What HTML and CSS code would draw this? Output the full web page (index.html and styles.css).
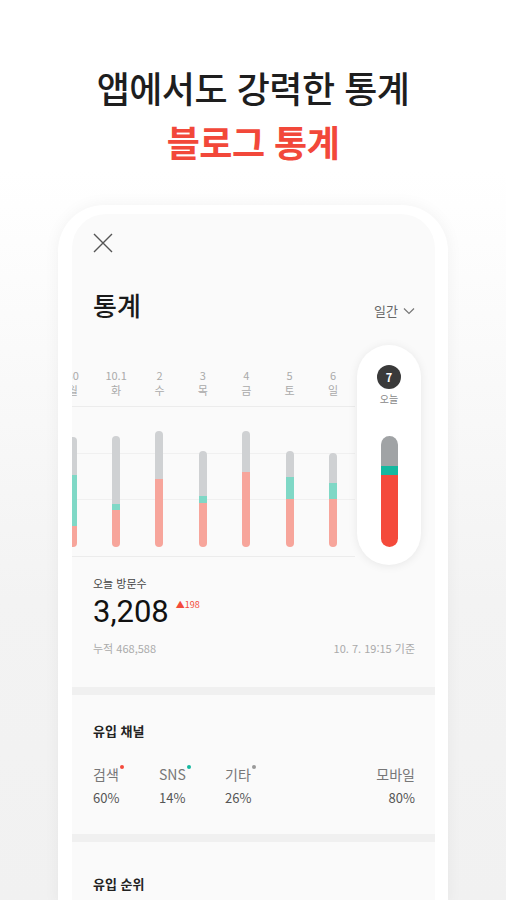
FILE: index.html
```html
<!DOCTYPE html>
<html lang="ko">
<head>
<meta charset="utf-8">
<title>블로그 통계</title>
<link rel="stylesheet" href="styles.css">
</head>
<body>
<header class="promo">
  <h1 class="promo-line">앱에서도 강력한 통계</h1>
  <p class="promo-line promo-accent">블로그 통계</p>
</header>
<div class="phone">
  <div class="screen">
    <div class="close">
      <svg width="20" height="20" viewBox="0 0 20 20"><path d="M1 1L19 19M19 1L1 19" stroke="#555" stroke-width="1.4" fill="none"/></svg>
    </div>
    <div class="title-row">
      <h2 class="title">통계</h2>
      <div class="period">일간
        <svg width="12" height="8" viewBox="0 0 12 8"><path d="M1 1.5L6 6.5L11 1.5" stroke="#777" stroke-width="1.2" fill="none"/></svg>
      </div>
    </div>
    <div class="chart">
      <div class="chart-cols">
        <div class="col"><div class="lbl"><span>30</span><span>월</span></div><div class="bar-area"><div class="bar"><i class="g" style="height:38px"></i><i class="t" style="height:51px"></i><i class="p" style="height:21px"></i></div></div></div>
        <div class="col"><div class="lbl"><span>10.1</span><span>화</span></div><div class="bar-area"><div class="bar"><i class="g" style="height:68px"></i><i class="t" style="height:6px"></i><i class="p" style="height:37px"></i></div></div></div>
        <div class="col"><div class="lbl"><span>2</span><span>수</span></div><div class="bar-area"><div class="bar"><i class="g" style="height:48px"></i><i class="p" style="height:68px"></i></div></div></div>
        <div class="col"><div class="lbl"><span>3</span><span>목</span></div><div class="bar-area"><div class="bar"><i class="g" style="height:45px"></i><i class="t" style="height:7px"></i><i class="p" style="height:44px"></i></div></div></div>
        <div class="col"><div class="lbl"><span>4</span><span>금</span></div><div class="bar-area"><div class="bar"><i class="g" style="height:41px"></i><i class="p" style="height:75px"></i></div></div></div>
        <div class="col"><div class="lbl"><span>5</span><span>토</span></div><div class="bar-area"><div class="bar"><i class="g" style="height:26px"></i><i class="t" style="height:22px"></i><i class="p" style="height:48px"></i></div></div></div>
        <div class="col"><div class="lbl"><span>6</span><span>일</span></div><div class="bar-area"><div class="bar"><i class="g" style="height:30px"></i><i class="t" style="height:16px"></i><i class="p" style="height:48px"></i></div></div></div>
      </div>
      <div class="today">
        <div class="today-day">7</div>
        <div class="today-lbl">오늘</div>
        <div class="today-bar"><i class="g" style="height:30px"></i><i class="t" style="height:9px"></i><i class="r" style="height:72px"></i></div>
      </div>
    </div>
    <section class="visits">
      <div class="small-label">오늘 방문수</div>
      <div class="visit-num">3,208<span class="delta">▲198</span></div>
      <div class="visit-foot"><span>누적 468,588</span><span>10. 7. 19:15 기준</span></div>
    </section>
    <section class="inflow">
      <h3 class="sec-title">유입 채널</h3>
      <div class="channels">
        <div class="ch"><div class="ch-name">검색<b class="dot dot-red"></b></div><div class="ch-val">60%</div></div>
        <div class="ch"><div class="ch-name">SNS<b class="dot dot-teal"></b></div><div class="ch-val">14%</div></div>
        <div class="ch"><div class="ch-name">기타<b class="dot dot-gray"></b></div><div class="ch-val">26%</div></div>
        <div class="ch ch-right"><div class="ch-name">모바일</div><div class="ch-val">80%</div></div>
      </div>
    </section>
    <section class="rank">
      <h3 class="sec-title">유입 순위</h3>
    </section>
  </div>
</div>
</body>
</html>
```
FILE: styles.css
```css
* { box-sizing: border-box; }
html, body { margin: 0; padding: 0; }
body {
  width: 506px;
  height: 900px;
  overflow: hidden;
  font-family: "Noto Sans CJK KR", "Noto Sans", sans-serif;
  background: linear-gradient(#ffffff 0px, #ffffff 170px, #f3f3f3 600px, #f1f1f1 900px);
  color: #222;
}
.promo { padding-top: 60px; text-align: center; }
.promo-line {
  margin: 0;
  font-size: 36px;
  line-height: 54px;
  font-weight: 500;
  color: #1e1e1e;
  letter-spacing: -0.5px;
}
.promo-accent { color: #f2483a; font-weight: 700; }
.phone {
  margin: 37px 0 0 58px;
  width: 390px;
  height: 700px;
  padding: 9px 13px 0 14px;
  background: #fff;
  border-radius: 46px 46px 0 0;
  box-shadow: 0 0 16px rgba(0,0,0,0.05);
}
.screen {
  width: 363px;
  height: 700px;
  background: #fafafa;
  border-radius: 34px 34px 0 0;
  overflow: hidden;
  position: relative;
}
.close { padding: 19px 0 0 21px; height: 39px; }
.close svg { display: block; }
.title-row {
  margin-top: 34px;
  height: 36px;
  display: flex;
  justify-content: space-between;
  align-items: flex-end;
  padding: 0 20px 0 21px;
}
.title { margin: 0; font-size: 26px; line-height: 36px; font-weight: 500; color: #1a1a1a; }
.period {
  font-size: 13px;
  line-height: 18px;
  color: #666;
  display: flex;
  align-items: center;
  gap: 5px;
  margin-bottom: 3px;
}
.chart { position: relative; margin-top: 39px; height: 195px; }
.chart-cols {
  display: flex;
  margin-left: -21px;
}
.col { width: 43.4px; flex: none; }
.lbl {
  height: 45px;
  padding-top: 6px;
  display: flex;
  flex-direction: column;
  align-items: center;
  font-size: 11px;
  line-height: 15px;
  color: #aaa;
  border-bottom: 1px solid #ececec;
}
.bar-area {
  height: 150px;
  display: flex;
  justify-content: center;
  align-items: flex-end;
  padding-bottom: 9px;
  border-bottom: 1px solid #ececec;
  background:
    linear-gradient(#f0f0f0, #f0f0f0) 0 46px / 100% 1px no-repeat,
    linear-gradient(#f0f0f0, #f0f0f0) 0 92px / 100% 1px no-repeat;
}
.bar, .today-bar {
  width: 8px;
  display: flex;
  flex-direction: column;
  border-radius: 4px;
  overflow: hidden;
}
.bar i, .today-bar i { display: block; flex: none; }
.g { background: #cfd1d3; }
.t { background: #7fd8c6; }
.p { background: #f7a59b; }
.today {
  position: absolute;
  top: -17px;
  left: 285px;
  width: 64px;
  height: 220px;
  border-radius: 32px;
  background: #fff;
  box-shadow: 0 1px 10px rgba(0,0,0,0.08);
  display: flex;
  flex-direction: column;
  align-items: center;
  padding-top: 20px;
}
.today-day {
  width: 24px;
  height: 24px;
  border-radius: 50%;
  background: #3a3a3a;
  color: #fff;
  font-size: 11px;
  font-weight: 700;
  line-height: 24px;
  text-align: center;
}
.today-lbl { margin-top: 3px; font-size: 10px; line-height: 14px; color: #888; }
.today-bar { width: 17px; border-radius: 8.5px; margin-top: 30px; }
.today-bar .g { background: #a0a3a5; }
.today-bar .t { background: #14b89f; }
.today-bar .r { background: #f44a3b; }
.visits { padding: 18px 20px 31px 21px; }
.small-label { font-size: 11px; line-height: 16px; color: #444; }
.visit-num {
  margin-top: 4px;
  font-family: Roboto, "Noto Sans", sans-serif;
  font-size: 31px;
  line-height: 34px;
  color: #111;
  display: flex;
  align-items: flex-start;
}
.delta {
  font-family: "Noto Sans CJK KR", sans-serif;
  font-size: 9px;
  line-height: 12px;
  color: #f44a3b;
  margin: 4px 0 0 7px;
}
.visit-foot {
  margin-top: 11px;
  display: flex;
  justify-content: space-between;
  font-size: 11px;
  line-height: 16px;
  color: #aaa;
}
.inflow, .rank { border-top: 8px solid #f0f0f0; }
.inflow { padding: 27px 20px 26px 21px; }
.sec-title { margin: 0; font-size: 13px; line-height: 18px; font-weight: 700; color: #222; }
.channels { display: flex; margin-top: 21px; }
.ch { width: 66px; }
.ch-right { margin-left: auto; text-align: right; width: auto; }
.ch-name { font-size: 14px; line-height: 20px; color: #777; position: relative; display: inline-block; }
.ch-val { font-size: 13px; line-height: 20px; color: #555; margin-top: 3px; }
.dot { position: absolute; top: 1px; right: -5px; width: 4px; height: 4px; border-radius: 50%; }
.dot-red { background: #f44a3b; }
.dot-teal { background: #14b89f; }
.dot-gray { background: #999; }
.rank { padding: 33px 21px 0; }
```
